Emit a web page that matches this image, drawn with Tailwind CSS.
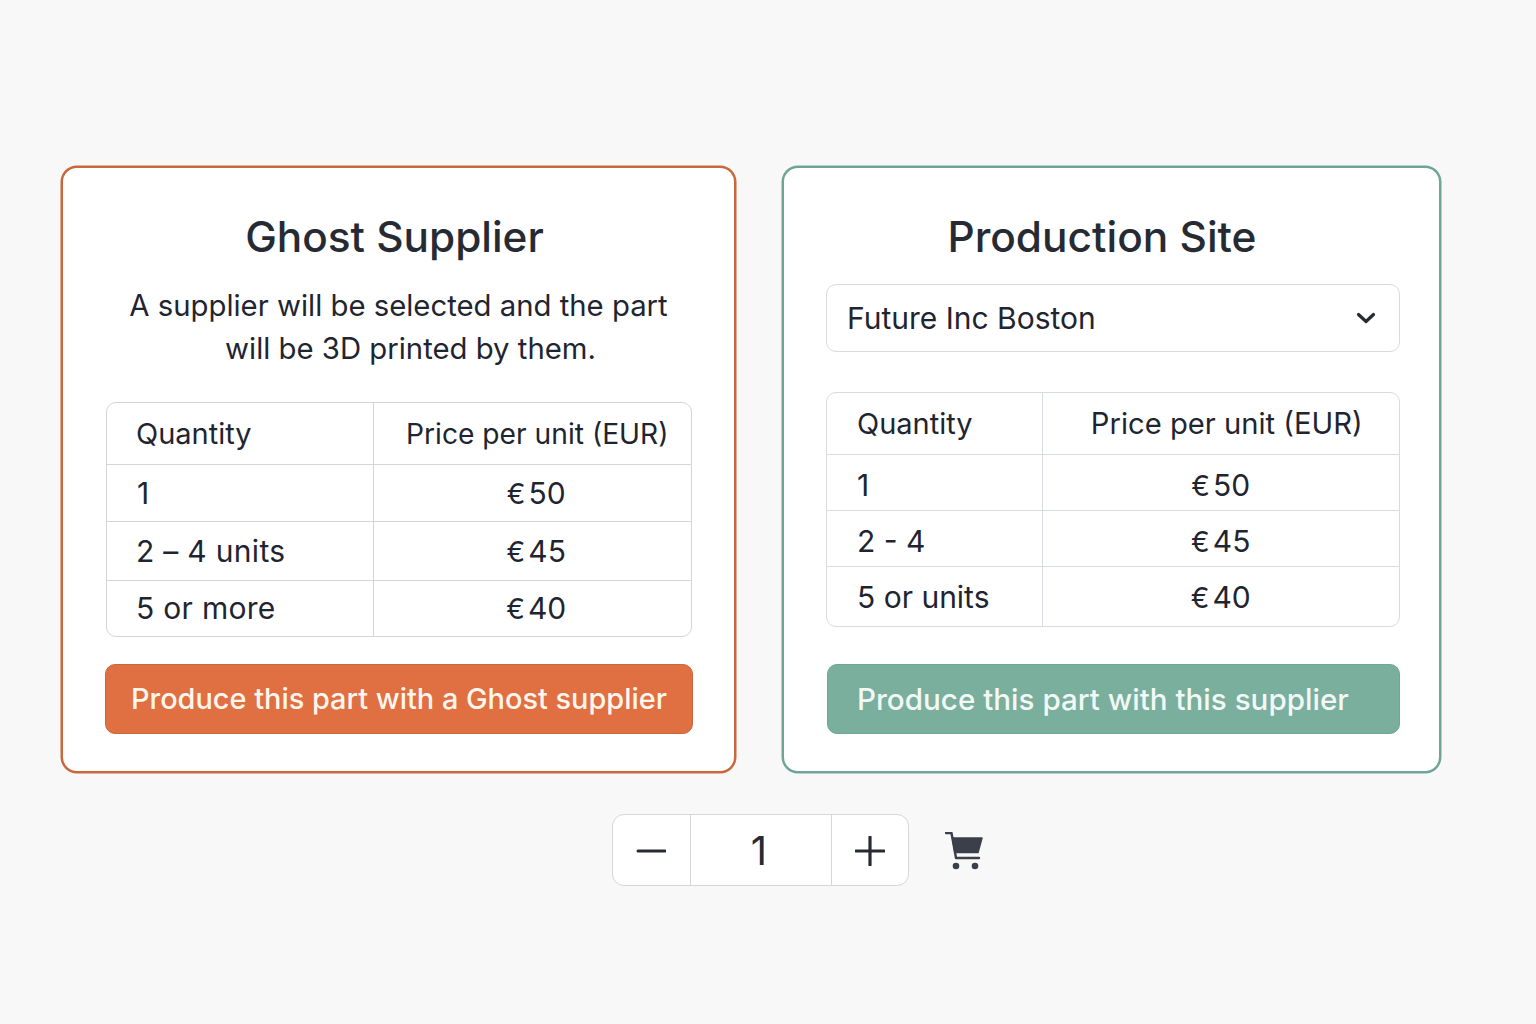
<!DOCTYPE html>
<html lang="en">
<head>
  <meta charset="UTF-8">
  <title>Supplier selection</title>
  <script src="https://cdn.jsdelivr.net/npm/@tailwindcss/browser@4"></script>
</head>
<body class="h-[1024px] w-[1536px] overflow-hidden bg-[#f8f8f8] font-['Inter',sans-serif] text-[#1f2530]">

  <div class="flex items-start gap-[46px] pl-[61px] pt-[166px]">

    <!-- Ghost supplier -->
    <section class="h-[607px] w-[675px] rounded-[16px] border-2 border-[#c9683c] bg-white px-[43px] shadow-[0_0_0_0.5px_#c9683c]">
      <h2 class="mt-[42px] pr-[8px] text-center text-[42.3px] leading-[54px] font-medium text-[#262b33]">Ghost Supplier</h2>
      <p class="mt-[20px] text-center text-[29.3px] leading-[43px] text-[#1f2530]">A supplier will be selected and the part<br><span class="pl-[24px]">will be 3D printed by them.</span></p>

      <div class="mt-[32px] -mr-px overflow-hidden rounded-[10px] border border-[#d2d6da] text-[30px] tracking-[0.3px]">
        <table class="w-full table-fixed border-collapse">
          <colgroup><col class="w-[266px]"><col></colgroup>
          <tbody>
            <tr class="h-[61px] border-b border-[#d2d6da]">
              <td class="border-r border-[#d2d6da] pl-[29px] text-[29px] tracking-normal">Quantity</td>
              <td class="pl-[10px] pt-[2px] text-center text-[28.2px] tracking-normal">Price per unit (EUR)</td>
            </tr>
            <tr class="h-[57px] border-b border-[#d2d6da]">
              <td class="border-r border-[#d2d6da] pl-[30px] pt-[2px]">1</td>
              <td class="pl-[8px] pt-[2px] text-center tracking-normal"><span class="mr-[3px] text-[28px]">€</span>50</td>
            </tr>
            <tr class="h-[59px] border-b border-[#d2d6da]">
              <td class="border-r border-[#d2d6da] pl-[29px] pt-[2px]">2 – 4 units</td>
              <td class="pl-[8px] pt-[2px] text-center tracking-normal"><span class="mr-[3px] text-[28px]">€</span>45</td>
            </tr>
            <tr class="h-[56px]">
              <td class="border-r border-[#d2d6da] pl-[29px]">5 or more</td>
              <td class="pl-[8px] text-center tracking-normal"><span class="mr-[3px] text-[28px]">€</span>40</td>
            </tr>
          </tbody>
        </table>
      </div>

      <button class="mt-[27px] -ml-px flex h-[70px] w-[588px] items-center rounded-[10px] border border-[#c9683c] bg-[#e06f41] pl-[25px] text-[28.9px] font-medium text-[#fff6ee]">Produce this part with a Ghost supplier</button>
    </section>

    <!-- Production site -->
    <section class="h-[607px] w-[659px] rounded-[16px] border-2 border-[#6fa597] bg-white pl-[42px] pr-[39px] shadow-[0_0_0_0.5px_#6fa597]">
      <h2 class="mt-[42px] pr-[22px] text-center text-[42.4px] leading-[54px] font-medium text-[#262b33]">Production Site</h2>

      <div class="mt-[20px] flex h-[68px] items-center justify-between rounded-[10px] border border-[#d8dbe0] pl-[20px] pr-[23px] text-[30px]">
        <span>Future Inc Boston</span>
        <svg class="h-[20px] w-[20px]" viewBox="0 0 20 20" fill="none" stroke="#262b33" stroke-width="3.2" stroke-linecap="round" stroke-linejoin="round"><path d="M2.5 6.5l7.5 7L17.5 6.5"/></svg>
      </div>

      <div class="mt-[40px] overflow-hidden rounded-[10px] border border-[#d8dbe0] text-[30px]">
        <table class="w-full table-fixed border-collapse">
          <colgroup><col class="w-[215px]"><col></colgroup>
          <tbody>
            <tr class="h-[61px] border-b border-[#d8dbe0]">
              <td class="border-r border-[#d8dbe0] pl-[30px] text-[29px]">Quantity</td>
              <td class="pl-[12px] pt-[1px] text-center text-[29.2px]">Price per unit (EUR)</td>
            </tr>
            <tr class="h-[56px] border-b border-[#d8dbe0]">
              <td class="border-r border-[#d8dbe0] pl-[30px] pt-[6px]">1</td>
              <td class="pt-[6px] text-center"><span class="mr-[3px] text-[28px]">€</span>50</td>
            </tr>
            <tr class="h-[56px] border-b border-[#d8dbe0]">
              <td class="border-r border-[#d8dbe0] pl-[30px] pt-[6px]">2 - 4</td>
              <td class="pt-[6px] text-center"><span class="mr-[3px] text-[28px]">€</span>45</td>
            </tr>
            <tr class="h-[60px]">
              <td class="border-r border-[#d8dbe0] pl-[30px] pt-[3px]">5 or units</td>
              <td class="pt-[3px] text-center"><span class="mr-[3px] text-[28px]">€</span>40</td>
            </tr>
          </tbody>
        </table>
      </div>

      <button class="mt-[37px] ml-px flex h-[70px] w-[573px] items-center rounded-[10px] border border-[#6fa597] bg-[#7aae9d] pl-[29px] text-[29.6px] font-medium text-[#f2f8f5]">Produce this part with this supplier</button>
    </section>
  </div>

  <!-- Quantity stepper and cart -->
  <div class="mt-[41px] flex items-center pl-[612px]">
    <div class="flex h-[72px] w-[297px] overflow-hidden rounded-[12px] border border-[#d6d6d6] bg-white">
      <div class="flex w-[78px] items-center justify-center border-r border-[#d6d6d6] pt-[2px] pr-[2px]">
        <svg class="h-[30px] w-[30px]" viewBox="0 0 30 30" stroke="#262b33" stroke-width="3" stroke-linecap="round"><path d="M2 15h27"/></svg>
      </div>
      <div class="flex w-[141px] items-center justify-center border-r border-[#d6d6d6] pt-[2px] pr-[4px] text-[40px] text-[#262b33]">1</div>
      <div class="flex flex-1 items-center justify-center pt-[2px]">
        <svg class="h-[30px] w-[30px]" viewBox="0 0 30 30" stroke="#262b33" stroke-width="3.2" stroke-linecap="round"><path d="M1 15h28M15 1v28"/></svg>
      </div>
    </div>
    <svg class="ml-[36px] mt-[2px] h-[38px] w-[38px]" viewBox="0 0 38 38" fill="#3a3f4a">
      <path d="M1 1h5.5L11 26h23" fill="none" stroke="#3a3f4a" stroke-width="2.4" stroke-linecap="round" stroke-linejoin="round"/>
      <path d="M7.5 6H37L33 20.5H10z" stroke="#3a3f4a" stroke-width="1.5" stroke-linejoin="round"/>
      <circle cx="11" cy="34" r="3.3"/>
      <circle cx="30" cy="34" r="3.3"/>
    </svg>
  </div>

</body>
</html>
